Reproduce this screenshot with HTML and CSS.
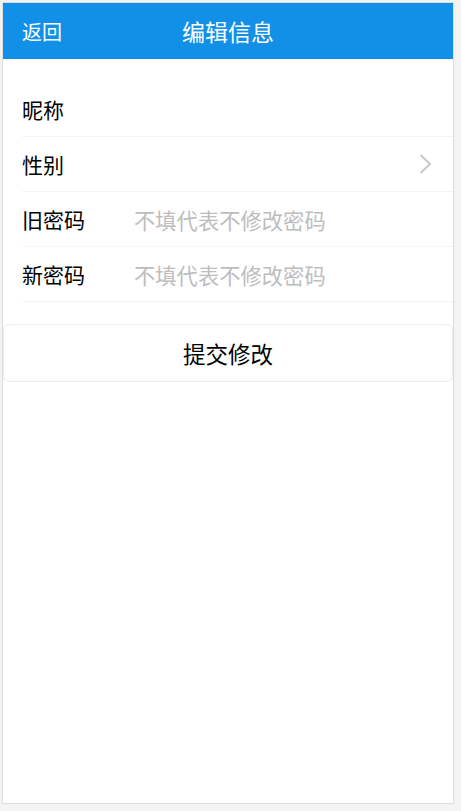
FILE: index.html
```html
<!DOCTYPE html>
<html lang="zh-CN">
<head>
    <meta charset="UTF-8">
    <meta name="viewport" content="width=device-width, initial-scale=1.0">
    <title>编辑信息</title>
    <link rel="stylesheet" href="styles.css">
</head>
<body>

    <div class="phone">
        <div class="header">
            <a class="back" href="#">返回</a>
            <h1>编辑信息</h1>
            <span></span>
        </div>

        <div class="form">
            <div class="row">
                <label for="nick">昵称</label>
                <input id="nick" type="text">
            </div>
            <div class="row">
                <label>性别</label>
                <span class="value"></span>
                <svg class="arrow" width="13" height="20" viewBox="0 0 13 20">
                    <path d="M1.5 1 L11 10 L1.5 19" fill="none" stroke="#c8c8cc" stroke-width="2"/>
                </svg>
            </div>
            <div class="row">
                <label for="oldPwd">旧密码</label>
                <input id="oldPwd" type="password" placeholder="不填代表不修改密码">
            </div>
            <div class="row">
                <label for="newPwd">新密码</label>
                <input id="newPwd" type="password" placeholder="不填代表不修改密码">
            </div>
        </div>

        <button class="submit">提交修改</button>
    </div>

</body>
</html>
```

FILE: styles.css
```css
body {
    margin: 0;
    padding: 2px;
    background-color: #f3f3f3;
    font-family: "Noto Sans CJK SC", "Noto Sans", sans-serif;
}
.phone {
    width: 450px;
    height: 800px;
    background: white;
    border: 1px solid #dedede;
}
.header {
    display: grid;
    grid-template-columns: 1fr auto 1fr;
    align-items: center;
    height: 56px;
    padding: 0 19px;
    background-color: #1290e8;
    color: white;
}
.back {
    color: white;
    text-decoration: none;
    font-size: 20px;
}
.header h1 {
    margin: 0;
    font-size: 23px;
    font-weight: normal;
}
.form {
    margin-top: 23px;
    padding-left: 19px;
}
.row {
    display: flex;
    align-items: center;
    height: 54px;
    border-bottom: 1px solid #f4f4f4;
    font-size: 21px;
}
.row label {
    width: 112px;
    color: #000;
}
.row input, .row .value {
    flex: 1;
    min-width: 0;
    border: none;
    outline: none;
    padding: 0;
    font-family: inherit;
    font-size: 21.3px;
    background: transparent;
}
.row input::placeholder {
    color: #bdbdbd;
}
.arrow {
    margin-right: 21px;
}
.submit {
    display: block;
    width: 100%;
    height: 58px;
    margin-top: 22px;
    background: white;
    border: 1px solid #ececec;
    border-radius: 6px;
    font-family: inherit;
    font-size: 22.5px;
    color: #000;
    cursor: pointer;
}
```
